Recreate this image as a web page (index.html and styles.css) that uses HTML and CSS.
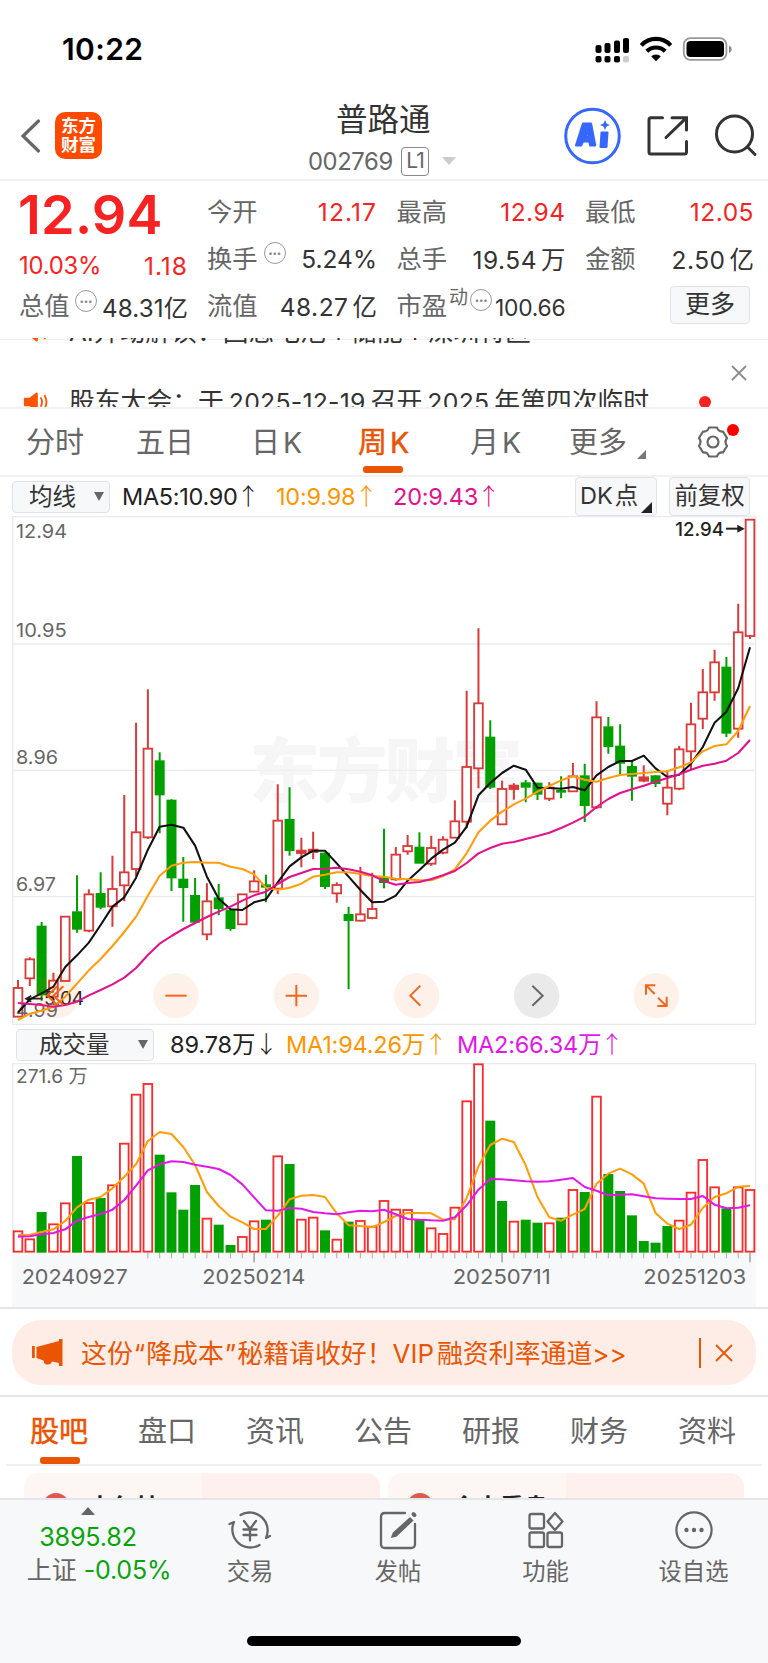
FILE: index.html
```html
<!DOCTYPE html>
<html lang="zh-CN">
<head>
<meta charset="utf-8">
<title>普路通 002769</title>
<link rel="stylesheet" href="styles.css">
</head>
<body>
<div class="screen">
  <div class="status">
    <span class="clock">10:22</span>
    <svg class="status-icons" width="138" height="30" viewBox="0 0 138 30">
      <g fill="#000">
        <rect x="0.5" y="11" width="6" height="8" rx="2"/><rect x="9.5" y="9" width="6" height="10" rx="2"/><rect x="19" y="6.500" width="6" height="12.500" rx="2"/><rect x="28" y="4" width="6" height="15" rx="2"/>
        <rect x="0.500" y="22" width="6" height="6.500" rx="2"/><rect x="9.500" y="22" width="6" height="6.500" rx="2"/><rect x="19" y="22" width="6" height="6.500" rx="2"/>
      </g>
      <rect x="28" y="22" width="6" height="6.500" rx="2" fill="#ccc"/>
      <g fill="none" stroke="#000" stroke-width="4.200"><path d="M46.300 11.300a20 20 0 0 1 29.400 0"/><path d="M51.800 17.300a13 13 0 0 1 18.400 0"/></g>
      <path d="M61 27.200l-4.800-4.900a7.200 7.200 0 0 1 9.600 0z"/>
      <rect x="88.800" y="4.200" width="42.600" height="21.600" rx="6.500" fill="none" stroke="#999" stroke-width="1.800"/>
      <rect x="91.500" y="7" width="37.500" height="16" rx="4"/><path d="M134 11.500c3.500 1.500 3.500 6 0 7.500z" fill="#888"/>
    </svg>
  </div>

  <header class="nav">
    <svg class="back" width="24" height="36" viewBox="0 0 24 36"><path d="M19.500 3L4 18l15.500 15" fill="none" stroke="#666" stroke-width="3.200" stroke-linecap="round"/></svg>
    <div class="logo"><span>东方</span><span>财富</span></div>
    <div class="title">
      <div class="name">普路通</div>
      <div class="code"><span class="num">002769</span><span class="lv">L1</span><svg width="14" height="8"><path d="M0 0h14l-7 8z" fill="#ccc"/></svg></div>
    </div>
    <svg class="tools" width="200" height="60" viewBox="0 0 200 60">
      <circle cx="28.500" cy="30" r="26.800" fill="none" stroke="#3667ff" stroke-width="3"/>
      <g fill="#3667ff"><path fill-rule="evenodd" stroke="#3667ff" stroke-width="2.200" stroke-linejoin="round" d="M19 17.500h8l4.200 22h-5l-.8-4h-6.400l-2 4h-5zM24 24.500l-2.600 6.500h3.400z"/><path stroke="#3667ff" stroke-width="2" stroke-linejoin="round" d="M37.500 26.500h6l-1 14.500h-6z"/><path d="M41 14l1.500 3.500 3.400 1.500-3.400 1.500-1.500 3.500-1.500-3.500-3.500-1.500 3.500-1.500z"/></g>
      <g fill="none" stroke="#333" stroke-width="3" stroke-linecap="round">
        <path d="M98.500 11.700H87q-2 0-2 2V46q0 2 2 2h33.500q2 0 2-2V35.500M108 11.700h14.500V24M122 12.200L102 31.500"/>
        <circle cx="170.500" cy="28" r="18"/><path d="M183.500 41l7.500 7.500"/>
      </g>
    </svg>
  </header>

  <section class="quote">
    <div class="q-main">
      <div class="price">12.94</div>
      <div class="row red"><span class="pct">10.03%</span><span class="chg">1.18</span></div>
      <div class="row cap"><span class="lb">总值</span><i class="dots">•••</i><b class="val">48.31<em>亿</em></b></div>
    </div>
    <div class="q-grid">
      <div class="cell"><span class="lb">今开</span><b class="red wide">12.17</b></div>
      <div class="cell"><span class="lb">最高</span><b class="red">12.94</b></div>
      <div class="cell"><span class="lb">最低</span><b class="red">12.05</b></div>
      <div class="cell"><span class="lb">换手<i class="dots">•••</i></span><b class="pc">5.24%</b></div>
      <div class="cell"><span class="lb">总手</span><b>19.54<em>万</em></b></div>
      <div class="cell"><span class="lb">金额</span><b>2.50<em>亿</em></b></div>
      <div class="cell"><span class="lb">流值</span><b>48.27<em>亿</em></b></div>
      <div class="cell"><span class="lb">市盈<sup>动</sup><i class="dots near">•••</i></span><b class="small">100.66</b></div>
      <div class="cell end"><span class="more">更多</span></div>
    </div>
  </section>

  <section class="ticker">
    <div class="news first"><svg width="28" height="22" viewBox="0 0 28 22"><path d="M1 6.500h6L14 1q2-1 2 1v18q0 2-2 1L7 15.500H1z" fill="#ff5500"/><path d="M19 6q3 5 0 10M23 3.500q4.500 7.500 0 15" fill="none" stroke="#ff5500" stroke-width="2"/></svg><span class="n1">AI异动解读：固态电池<i>+</i>储能<i>+</i>深圳特区</span><u></u></div>
    <div class="news"><svg width="28" height="22" viewBox="0 0 28 22"><path d="M1 6.500h6L14 1q2-1 2 1v18q0 2-2 1L7 15.500H1z" fill="#ff5500"/><path d="M19 6q3 5 0 10M23 3.500q4.500 7.500 0 15" fill="none" stroke="#ff5500" stroke-width="2"/></svg><span class="n2">股东大会：于<i>2025-12-19</i>召开<i>2025</i>年第四次临时</span><u></u></div>
    <svg class="close" width="18" height="18"><path d="M2 2l14 14M16 2L2 16" stroke="#8c8c8c" stroke-width="1.800"/></svg>
  </section>

  <nav class="periods">
    <span>分时</span><span>五日</span><span>日<i>K</i></span><span class="on">周<i>K</i></span><span>月<i>K</i></span><span>更多<svg class="tri" width="9" height="9"><path d="M9 0v9H0z" fill="#777"/></svg></span>
    <span class="gear"><svg width="34" height="34" viewBox="0 0 34 34" fill="none" stroke="#666" stroke-width="2.200" stroke-linejoin="round"><path d="M13 2.500h8q1.500 4.500 6 4l4 6.500q-3 4 0 8l-4 6.500q-4.500-.5-6 4h-8q-1.500-4.500-6-4L3 21q3-4 0-8l4-6.500q4.500.5 6-4z"/><circle cx="17" cy="17" r="5.500"/></svg><u></u></span>
  </nav>

  <div class="ma-bar">
    <span class="box sel">均线<svg width="10" height="9"><path d="M0 0h10L5 9z" fill="#666"/></svg></span>
    <span class="ma a">MA5:10.90<i>↑</i></span><span class="ma b">10:9.98<i>↑</i></span><span class="ma c">20:9.43<i>↑</i></span>
    <span class="box dk">DK<em>点</em><svg width="11" height="11"><path d="M11 0v11H0z" fill="#222"/></svg></span>
    <span class="box fq">前复权</span>
  </div>

  <svg id="price" class="chart" width="768" height="510" viewBox="0 18 2304 1530"></svg>

  <div class="vol-bar">
    <span class="box sel">成交量<svg width="10" height="9"><path d="M0 0h10L5 9z" fill="#666"/></svg></span>
    <span class="ma a">89.78<em>万</em><i>↓</i></span><span class="ma b">MA1:94.26<em>万</em><i>↑</i></span><span class="ma c">MA2:66.34<em>万</em><i>↑</i></span>
  </div>

  <svg id="volume" class="chart" width="768" height="244" viewBox="0 129 2304 732"></svg>

  <section class="promo-wrap">
    <div class="promo">
      <svg width="32" height="28" viewBox="0 0 32 28" fill="#ea5504"><path d="M0 7h2.800v12H0zM4.500 8L27 2V0h3.500v27H27v-3l-7-1.500q-1 3.500-5 3-3 0-3.500-4L4.500 19z"/></svg>
      <span class="ad">这份<q>“</q>降成本<q>”</q>秘籍请收好！<i>VIP</i>融资利率通道&gt;&gt;</span>
      <s></s>
      <svg width="18" height="18"><path d="M1 1l16 16M17 1L1 17" stroke="#ea5504" stroke-width="1.800"/></svg>
    </div>
  </section>

  <nav class="tabs">
    <span class="on">股吧</span><span>盘口</span><span>资讯</span><span>公告</span><span>研报</span><span>财务</span><span>资料</span>
  </nav>

  <section class="cards">
    <div class="card"><u></u><span>大包扶</span></div>
    <div class="card"><u></u><span>今大看盘</span></div>
  </section>

  <footer class="dock">
    <div class="index">
      <svg width="14" height="8"><path d="M7 0l7 8H0z" fill="#666"/></svg>
      <div class="pts">3895.82</div>
      <div class="idx"><span>上证</span><b>-0.05%</b></div>
    </div>
    <div class="item"><svg width="44" height="40" viewBox="0 0 44 40" fill="none" stroke="#666" stroke-width="2.300" stroke-linecap="round" stroke-linejoin="round"><path d="M12.500 5A18 18 0 0 1 38 28l4-2M31.500 35A18 18 0 0 1 6 12l-4.500 2"/><path d="M16 11l6 8 6-8M15.500 19.500h13M15.500 25h13M22 19v11.500"/></svg><span>交易</span></div>
    <div class="item"><svg width="44" height="40" viewBox="0 0 44 40" fill="none" stroke="#666" stroke-width="2.300" stroke-linecap="round"><path d="M29 3H9Q5 3 5 7v27q0 4 4 4h26q4 0 4-4V14"/><path d="M34 8l2.500 2.500L20 26l-4 1 1.500-4z" fill="#666" stroke-width="1.500"/><path d="M37.500 4.200l1 1" stroke-width="4"/></svg><span>发帖</span></div>
    <div class="item"><svg width="44" height="40" viewBox="0 0 44 40" fill="none" stroke="#666" stroke-width="2.300" stroke-linejoin="round"><rect x="5.500" y="4" width="14.500" height="14.500" rx="2"/><path d="M31 3l7.500 8.500L31 20l-7.500-8.500z"/><rect x="5.500" y="22.500" width="14.500" height="14.500" rx="2"/><rect x="23.500" y="22.500" width="14.500" height="14.500" rx="2"/></svg><span>功能</span></div>
    <div class="item"><svg width="44" height="40" viewBox="0 0 44 40"><circle cx="22" cy="20" r="17.600" fill="none" stroke="#666" stroke-width="2.200"/><g fill="#666"><circle cx="14.500" cy="20" r="2.200"/><circle cx="22" cy="20" r="2.200"/><circle cx="29.500" cy="20" r="2.200"/></g></svg><span>设自选</span></div>
    <div class="home"></div>
  </footer>
</div>
<script src="chart.js"></script>
</body>
</html>
```
FILE: styles.css
```css
* { box-sizing: border-box; }
body { margin: 0; background: #fff; font-family: Inter, "Noto Sans CJK SC", sans-serif; color: #333; }
i, em, b { font-style: normal; font-weight: 400; }
u { text-decoration: none; }
svg { display: block; flex: none; }
.screen { width: 768px; height: 1663px; overflow: hidden; display: flex; flex-direction: column; }
.screen > * { flex: none; }
.screen span, .screen b { white-space: nowrap; }
.red, .red b { color: #f82222; }

.status { height: 92px; padding: 34px 35px 0 62px; display: flex; justify-content: space-between; align-items: flex-start; color: #000; }
.clock { font-size: 30px; line-height: 31px; font-weight: 600; letter-spacing: .4px; }

.nav { height: 89px; border-bottom: 2px solid #f0f0f0; display: grid; grid-template-columns: 55px 47px 1fr 204px; }
.back { margin: 26px 0 0 19px; }
.logo { width: 47px; height: 47px; margin-top: 20px; border-radius: 10px; background: #ff4a00; color: #fff; display: flex; flex-direction: column; align-items: center; justify-content: center; font-size: 17.5px; line-height: 19.5px; font-weight: 700; padding-bottom: 1px; }
.title { display: flex; flex-direction: column; padding-left: 206px; }
.name { font-size: 31.5px; line-height: 36px; margin: 10px 0 0 28px; }
.code { display: flex; align-items: center; margin-top: 8px; color: #666; height: 30px; }
.code .num { font-size: 23.8px; letter-spacing: -.4px; width: 93px; }
.lv { width: 28px; height: 29px; border: 1.5px solid #888; border-radius: 4px; font-size: 21px; line-height: 26px; text-align: center; margin-right: 13px; letter-spacing: -1px; }
.tools { margin-top: 14px; }

.quote { height: 157px; display: grid; grid-template-columns: 169px 547px; column-gap: 19px; padding-left: 19px; }
.price { font-size: 54px; line-height: 54px; font-weight: 600; margin: 7px 0 0 -1px; letter-spacing: .2px; height: 62px; color: #f82222; }
.row { display: flex; justify-content: space-between; align-items: center; }
.row.red { font-size: 23.8px; height: 30px; letter-spacing: -.2px; }
.chg { letter-spacing: 1px; font-size: 24.5px; padding-top: 2px; }
.cap { height: 47px; padding-top: 3px; }
.lb { font-size: 25.3px; color: #666; display: flex; align-items: center; position: relative; margin-top: -3px; }
.val { font-size: 24.2px; letter-spacing: .1px; padding-top: 2px; }
.dots { display: flex; align-items: center; justify-content: center; width: 22px; height: 22px; border: 1.5px solid #999; border-radius: 50%; color: #888; font-size: 8px; letter-spacing: -.2px; flex: none; margin: -8px 0 0 6px; }
.cap .dots { margin: -9px 0 0 0; }
.dots.near { margin-left: 2px; }
.q-grid { display: grid; grid-template-columns: 170px 169px 169px; column-gap: 19.500px; grid-template-rows: 47px 47px 47px; padding-top: 7px; }
.cell { display: flex; justify-content: space-between; align-items: center; font-size: 24.5px; letter-spacing: .5px; }
.cell .wide { letter-spacing: 1.1px; }
.cell .pc { letter-spacing: 0; }
.cell .lb { letter-spacing: 0; }
.cell.end { justify-content: flex-end; }
.cell em { margin-left: 4px; letter-spacing: 0; }
.cell b.small { font-size: 22.8px; letter-spacing: -.2px; padding-top: 4px; }
sup { font-size: 19px; line-height: 20px; margin: -13px 0 0 2px; }
.more { width: 80px; height: 38px; margin: -1px 4px 0 0; border: 1.5px solid #dfe2e8; border-radius: 4px; background: #f7f8fa; font-size: 25px; line-height: 34px; text-align: center; letter-spacing: 0; }

.ticker { height: 71px; border-bottom: 2px solid #f2f2f2; overflow: hidden; position: relative; background: linear-gradient(#f0f0f0, #f0f0f0) 0 1px / 100% 1px no-repeat; }
.news { height: 70px; display: grid; grid-template-columns: 46px 1fr 69px; align-items: center; padding-left: 23px; font-size: 25.8px; line-height: 68px; }
.news svg { width: 26px; }
.news.first { margin-top: -41px; }
.news u { width: 12px; height: 12px; border-radius: 50%; background: #f82222; }
.n1 i { margin: 0 4px; }
.n2 i { margin: 0 5px; letter-spacing: .25px; font-size: 24.800px; }
.close { position: absolute; left: 730px; top: 26px; }

.periods { height: 68px; border-bottom: 2px solid #f2f2f2; display: grid; grid-template-columns: 110px 115px 107px 112px 99px 127px 1fr; padding-left: 26px; font-size: 29px; line-height: 68px; color: #666; }
.periods span { position: relative; }
.periods i { margin-left: 3px; font-size: 28.5px; }
.periods .on, .tabs .on { color: #ea5504; -webkit-text-stroke: .5px #ea5504; }
.on::after { content: ""; position: absolute; left: 5px; bottom: 4px; width: 40px; height: 7px; border-radius: 3px; background: #ea5504; }
.tri { position: absolute; left: 68px; top: 41px; }
.gear svg { margin-top: 16px; }
.gear u { position: absolute; left: 31px; top: 15px; width: 12px; height: 12px; border-radius: 50%; background: #f00; }

.ma-bar, .vol-bar { display: grid; align-items: center; font-size: 23.500px; }
.ma-bar { height: 39px; grid-template-columns: 98px 141px 142px 130px 171px 84px; padding-left: 12px; }
.ma-bar > :nth-child(2) { margin-left: 12px; }
.ma-bar > :nth-child(3) { margin-left: 25px; }
.box { border: 1.5px solid #dfe2e8; border-radius: 4px; background: #f7f8fa; color: #333; display: flex; align-items: center; }
.sel { height: 32px; justify-content: space-between; padding: 0 5px 0 16px; line-height: 28px; }
.ma { margin-top: -4px; }
.a { color: #222; letter-spacing: -.3px; }
.b { color: #ff9500; letter-spacing: -.2px; }
.c { color: #e3128c; letter-spacing: -.2px; }
.ma i { font-family: "Noto Sans CJK SC"; font-weight: 300; display: inline-block; width: 18px; margin-left: 1px; text-indent: -2px; letter-spacing: 0; }
.dk, .fq { height: 39px; line-height: 34px; padding-bottom: 2px; }
.dk { width: 82px; padding-left: 4px; margin-left: 52px; position: relative; }
.dk em { margin-left: 2px; }
.dk svg { position: absolute; right: 4px; bottom: 2px; }
.fq { width: 81px; justify-content: center; margin-left: -25px; letter-spacing: -.2px; }
.vol-bar { height: 37px; grid-template-columns: 138px 132px 171px 180px; padding-left: 16px; }
.vol-bar .sel { padding: 0 5px 0 22px; }
.vol-bar .a { margin-left: 16px; letter-spacing: -.1px; }
.vol-bar .c { color: #e218e8; }
.chart { font-family: Inter, "Noto Sans CJK SC", sans-serif; }

.promo-wrap { height: 90px; border-top: 2px solid #e6e6ea; border-bottom: 2px solid #e6e6ea; padding: 11px 12px 0; }
.promo { height: 65px; border-radius: 29px; background: #fdede6; color: #ea5504; display: grid; grid-template-columns: 49px 618px 16px 18px; align-items: center; padding-left: 20px; }
.ad { font-size: 25.9px; margin-top: -3px; }
.ad q { quotes: none; margin: 0 1px; }
.ad i { margin-right: 3px; }
.promo s { width: 2px; height: 30px; background: #ea5504; }

.tabs { height: 69px; margin: 0 6px; border-bottom: 2px solid #efefef; display: grid; grid-template-columns: repeat(7, 108px); padding-left: 24px; font-size: 29px; line-height: 69px; color: #666; }
.tabs span { position: relative; }
.tabs .on::after { left: 10px; bottom: 2px; }

.cards { height: 32px; padding: 7px 24px 0; display: grid; grid-template-columns: 356px 356px; gap: 8px; overflow: hidden; }
.card { height: 80px; border-radius: 14px; background: linear-gradient(90deg, #fdf6f3 0 50%, #fdf0ed 50%); display: flex; align-items: flex-start; padding: 20px 0 0 19px; font-size: 24px; font-weight: 700; line-height: 26px; color: #222; }
.card u { width: 26px; height: 26px; border-radius: 50%; background: #de5a50; margin-right: 19px; }
.card span { padding-top: 2px; }

.dock { height: 166px; border-top: 2px solid #e4e5e8; background: #f7f8fa; display: grid; grid-template-columns: 176px 148px 148px 147px 149px; color: #666; position: relative; }
.index { display: flex; flex-direction: column; align-items: center; padding-top: 7px; }
.pts { font-size: 25.200px; line-height: 30px; margin-top: 7px; color: #09a30c; letter-spacing: -.2px; }
.idx { display: flex; align-items: center; line-height: 32px; font-size: 25px; margin: 2px 0 0 22px; }
.idx b { color: #09a30c; margin-left: 7px; letter-spacing: -.2px; }
.item { display: flex; flex-direction: column; align-items: center; padding-top: 10px; font-size: 23.300px; line-height: 30px; }
.item span { margin-top: 7px; }
.home { position: absolute; left: 247px; top: 136px; width: 274px; height: 10px; border-radius: 5px; background: #000; }
```
FILE: chart.js
```js
// Coordinates are in thirds of a pixel; one bar every PITCH units.
const X0 = 54, PITCH = 35.42;
const x = i => X0 + i * PITCH;
const RED = '#d93a3a', GREEN = '#00a000';

// [up/down, high, body top, body bottom, low]
const candles = [
['r',1410,1434,1520,1520],['r',1342,1348,1405,1428],['g',1236,1248,1455,1472],['r',1388,1412,1460,1470],['r',1220,1220,1413,1413],['g',1096,1205,1258,1268],['r',1138,1153,1262,1267],['g',1087,1150,1192,1198],['r',1037,1137,1189,1250],['r',855,1087,1126,1174],['r',638,967,1077,1100],['r',538,716,982,987],['g',727,752,855,970],['g',868,870,1104,1143],['g',1041,1107,1133,1235],['g',1104,1156,1237,1240],['r',1120,1174,1273,1291],['g',1122,1163,1196,1216],['g',1198,1200,1256,1262],['r',1153,1153,1243,1245],['r',1081,1114,1145,1145],
['g',1094,1124,1132,1177],['r',823,932,1136,1152],['g',832,928,1022,1037],['r',983,1022,1029,1072],['r',965,1019,1026,1048],['g',1027,1029,1130,1137],['r',1117,1125,1150,1178],['g',1190,1213,1232,1438],['r',1070,1213,1232,1234],['r',1088,1197,1224,1228],['g',956,1103,1118,1135],['r',1011,1034,1108,1112],['r',975,1008,1024,1034],['g',967,1011,1060,1060],['r',977,1014,1061,1067],['r',979,989,1028,1033],['r',871,934,983,983],['r',542,771,935,955],['r',355,580,775,835],['g',631,681,832,837],['r',812,837,943,943],
['r',820,827,837,869],['g',810,818,832,877],['g',818,819,853,870],['r',817,833,866,873],['g',799,841,847,865],['r',759,799,844,845],['g',761,797,887,936],['r',574,622,892,897],['g',621,650,710,731],['g',643,708,760,795],['g',752,769,799,872],['r',766,802,812,817],['g',795,797,821,831],['r',780,833,881,916],['r',708,718,836,841],['r',578,643,724,778],['r',477,547,626,657],['r',419,457,547,572],['g',441,471,670,681],['r',281,367,656,683],['r',29,29,378,387]];
const ma5 = [1508,1468,1450,1430,1371,1336,1298,1245,1190,1162,1103,1019,950,944,953,1007,1100,1166,1198,1200,1177,1168,1117,1069,1042,1022,1022,1060,1100,1140,1177,1175,1157,1112,1080,1046,1019,998,950,856,819,789,767,779,833,834,836,831,841,796,771,753,753,737,775,801,794,761,711,638,605,535,412];
const ma10 = [1530,1511,1502,1490,1460,1421,1381,1347,1308,1266,1220,1157,1097,1067,1058,1056,1058,1058,1070,1077,1093,1133,1139,1133,1121,1100,1094,1087,1087,1092,1098,1100,1106,1108,1111,1111,1098,1078,1030,967,932,905,883,866,845,828,811,799,809,815,804,795,792,789,786,784,772,757,724,708,703,663,588];
const ma20 = [1479,1482,1485,1490,1485,1475,1456,1440,1423,1403,1374,1335,1301,1278,1257,1239,1221,1205,1190,1172,1156,1145,1122,1101,1089,1077,1076,1073,1078,1085,1096,1113,1124,1119,1116,1107,1096,1083,1059,1030,1014,1001,996,987,978,968,954,938,920,891,867,849,838,827,815,804,793,779,767,761,752,729,690];

const vols = [634,658,577,613,550,409,549,535,496,371,224,192,405,518,570,496,596,615,676,651,604,600,409,433,599,593,632,659,606,603,620,543,569,570,598,625,642,563,244,133,303,544,605,600,609,610,594,510,517,230,463,514,587,664,669,619,602,518,420,502,566,502,510];
const volDown = new Set([2,5,7,12,13,14,15,17,18,21,23,26,28,34,40,41,43,44,46,48,50,51,52,53,54,55,60]);
const volMa1 = [645,644,636,628,603,562,539,531,505,470,433,363,336,342,381,435,516,558,590,607,627,627,587,538,527,525,531,580,616,618,622,606,588,579,579,580,599,598,534,439,375,356,366,436,531,592,602,584,567,491,461,446,463,491,579,611,627,614,564,531,520,500,498];
const volMa2 = [650,649,643,639,628,602,591,582,569,540,497,451,433,424,426,434,440,447,465,493,532,571,572,564,566,576,580,583,577,572,574,569,583,597,599,601,602,592,556,509,477,478,481,484,485,484,479,474,501,512,526,524,523,529,535,536,537,537,528,554,565,563,556];

const line = (pts, color) => `<polyline fill="none" stroke="${color}" stroke-width="6.200" stroke-linejoin="round" points="${pts.map((y, i) => x(i).toFixed(1) + ',' + y).join(' ')}"/>`;
const label = (tx, ty, w, s, size = 57, color = '#666', extra = '') => `<text x="${tx}" y="${ty}" font-size="${size}" fill="${color}" textLength="${w}" lengthAdjust="spacingAndGlyphs" ${extra}>${s}</text>`;

function drawPrice() {
  let s = '<path d="M38 20H2267V1543H38zM38 402H2267M38 781H2267M38 1160H2267" fill="none" stroke="#e8eaf0" stroke-width="4"/>';
  s += '<text x="748" y="862" font-size="212" font-weight="900" fill="#f6f6f6" textLength="820" font-family="Noto Sans CJK SC">东方财富</text>';
  s += '<path d="M750 781H1570" stroke="#eceef3" stroke-width="4"/>';
  s += label(48, 83, 153, '12.94') + label(48, 382, 152, '10.95') + label(48, 762, 126, '8.96') + label(48, 1144, 120, '6.97');
  candles.forEach(([t, h, a, b, l], i) => {
    const c = t === 'r' ? RED : GREEN, cx = x(i);
    s += `<path d="M${cx} ${h}V${a}M${cx} ${b}V${l}" stroke="${c}" stroke-width="6"/>`;
    s += t === 'r'
      ? `<rect x="${cx - 13}" y="${a}" width="26" height="${b - a}" fill="${b - a < 11 ? c : '#fff'}" stroke="${c}" stroke-width="5.500"/>`
      : `<rect x="${cx - 15}" y="${a - 1}" width="30" height="${b - a + 2}" fill="${c}"/>`;
  });
  s += label(132, 1485, 120, '5.04', 57, '#222') + '<path d="M128 1466H80M94 1457L78 1466l16 9" fill="none" stroke="#222" stroke-width="5"/>';
  s += label(48, 1520, 126, '4.99');
  s += line(ma5, '#111') + line(ma10, '#ff9d0a') + line(ma20, '#e3128c');
  s += label(2026, 77, 146, '12.94', 57, '#222', 'font-weight="500"') + '<path d="M2178 56H2225" stroke="#222" stroke-width="6"/><path d="M2212 44l22 12-22 12z" fill="#222"/>';
  const btn = (cx, icon, bg = '#f2651a', fg = '#f2651a') => `<g transform="translate(${cx} 1457)"><circle r="68" fill="${bg}" fill-opacity=".09"/><path d="${icon}" fill="none" stroke="${fg}" stroke-width="6"/></g>`;
  s += btn(170, 'M2 -28l-30 28 30 28M20 -28L-10 0l30 28');
  s += btn(528, 'M-32 0H32') + btn(889, 'M-32 0H32M0 -32V32');
  s += btn(1250, 'M11 -30L-19 0l30 30') + btn(1610, 'M-13 -30L18 0l-31 30', '#111', '#666');
  s += btn(1969, 'M-5 -5L-30 -30M-31 -3V-31H-3M5 6L30 31M31 3V31H3');
  document.getElementById('price').innerHTML = s;
}

function drawVolume() {
  let s = '<rect x="36" y="697" width="2232" height="166" fill="#f7f8fa"/><path d="M38 697V131H2267V697" fill="none" stroke="#e8eaf0" stroke-width="4"/>';
  s += label(48, 188, 215, '271.6 万');
  vols.forEach((y, i) => {
    const cx = x(i);
    s += !volDown.has(i)
      ? `<rect x="${cx - 13}" y="${y}" width="26" height="${695 - y}" fill="#fff" stroke="#f92b2b" stroke-width="5.500"/>`
      : `<rect x="${cx - 15}" y="${y - 1}" width="30" height="${699 - y}" fill="${GREEN}"/>`;
    if (i > 10) {
      const major = [20, 41, 62].includes(i);
      s += `<path d="M${cx} 699V${major ? 727 : 715}" stroke="#aaa" stroke-width="${major ? 5 : 3}"/>`;
    }
  });
  s += line(volMa1, '#ff9d0a') + line(volMa2, '#e218e8');
  s += label(65, 791, 318, '20240927', 62) + label(607, 791, 309, '20250214', 62) + label(1358, 791, 294, '20250711', 62) + label(1930, 791, 309, '20251203', 62);
  document.getElementById('volume').innerHTML = s;
}

drawPrice();
drawVolume();
```
